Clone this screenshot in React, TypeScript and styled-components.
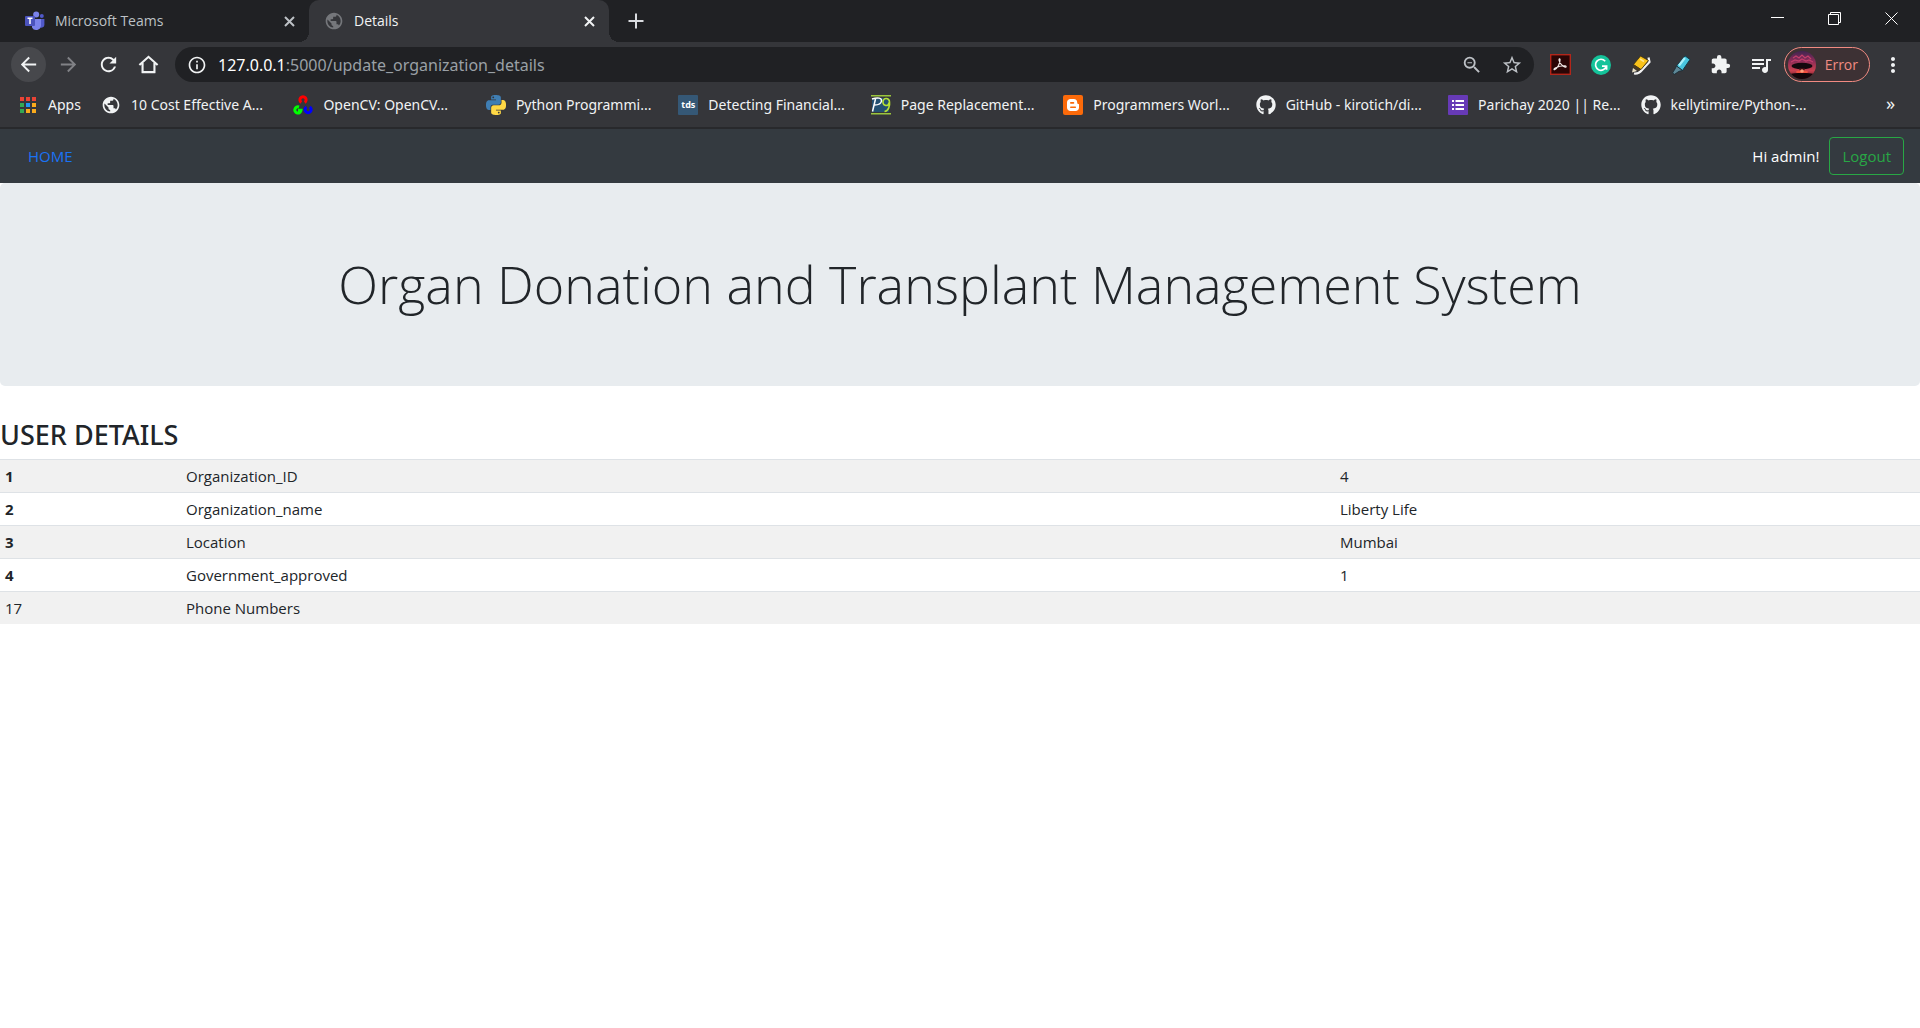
import React from "react";
import styled, { createGlobalStyle } from "styled-components";
import {
  MdArrowBack,
  MdArrowForward,
  MdExtension,
  MdInfoOutline,
  MdMoreVert,
  MdPublic,
  MdQueueMusic,
  MdRefresh,
  MdStarBorder,
  MdZoomOut,
} from "react-icons/md";
import { FaGithub } from "react-icons/fa";

const fontStack = `"Open Sans", "Noto Sans", sans-serif`;
const wideFontStack = `"Noto Sans", "Open Sans", sans-serif`;

const GlobalStyle = createGlobalStyle`
  * { box-sizing: border-box; }
  body {
    margin: 0;
    background: #fff;
    color: #212529;
    font-family: ${fontStack};
    font-size: 15px;
    line-height: 24px;
  }
  button, input { font-family: inherit; }
  svg { display: block; flex: none; }
`;

const PlainButton = styled.button`
  display: flex;
  align-items: center;
  justify-content: center;
  padding: 0;
  border: 0;
  background: none;
  color: inherit;
  cursor: pointer;
`;

/* Browser chrome */

const Chrome = styled.div`
  background: #35363a;
  color: #f1f3f4;
  border-bottom: 2px solid #28292c;
`;

const TabStrip = styled.div`
  display: flex;
  height: 42px;
  background: #202124;
`;

const Tab = styled.div<{ $active?: boolean }>`
  position: relative;
  display: flex;
  align-items: center;
  gap: 10px;
  width: ${(p) => (p.$active ? 300 : 309)}px;
  padding: 0 12px 0 ${(p) => (p.$active ? 15 : 25)}px;
  border-radius: 10px 10px 0 0;
  background: ${(p) => (p.$active ? "#35363a" : "transparent")};
  color: ${(p) => (p.$active ? "#f1f3f4" : "#bdc1c6")};
  font-size: 14px;

  &::before,
  &::after {
    content: "";
    display: ${(p) => (p.$active ? "block" : "none")};
    position: absolute;
    bottom: 0;
    width: 10px;
    height: 10px;
  }
  &::before {
    right: 100%;
    background: radial-gradient(circle at 0 0, transparent 10px, #35363a 10px);
  }
  &::after {
    left: 100%;
    background: radial-gradient(circle at 100% 0, transparent 10px, #35363a 10px);
  }
`;

const TabTitle = styled.span`
  flex: 1;
  overflow: hidden;
  white-space: nowrap;
`;

const TabClose = styled(PlainButton)`
  width: 16px;
  height: 24px;
`;

const NewTab = styled(PlainButton)`
  width: 32px;
  margin-left: 11px;
  color: #dadce0;
`;

const WindowButtons = styled.div`
  display: flex;
  align-items: flex-start;
  margin-left: auto;
`;

const WindowButton = styled(PlainButton)`
  width: 57px;
  height: 37px;
  color: #fff;
`;

const Toolbar = styled.div`
  display: flex;
  align-items: center;
  padding: 5px 14px 4px 8px;
`;

const NavButton = styled(PlainButton)<{ $held?: boolean; $dim?: boolean }>`
  width: 40px;
  height: 35px;
  color: ${(p) => (p.$dim ? "#818286" : "#f1f3f4")};

  svg {
    padding: 6px;
    width: 35px;
    height: 35px;
    border-radius: 50%;
    background: ${(p) => (p.$held ? "#47484c" : "transparent")};
  }
`;

const Omnibox = styled.div`
  display: flex;
  align-items: center;
  flex: 1;
  height: 35px;
  margin: 0 7px;
  padding: 0 2px 0 12px;
  border-radius: 18px;
  background: #202124;
`;

const Address = styled.div`
  flex: 1;
  padding-left: 11px;
  color: #9aa0a6;
  font-family: ${wideFontStack};
  font-size: 16px;
`;

const Host = styled.span`
  color: #fff;
`;

const ToolButton = styled(PlainButton)<{ $muted?: boolean }>`
  width: 40px;
  height: 35px;
  color: ${(p) => (p.$muted ? "#bdc1c6" : "#f1f3f4")};
`;

const Profile = styled(PlainButton)`
  gap: 9px;
  height: 35px;
  margin: 0 9px 0 3px;
  padding: 0 11px 0 3px;
  border: 1px solid #f28b82;
  border-radius: 18px;
  background: #3d3134;
  color: #f28b82;
  font-size: 14px;
`;

const MenuButton = styled(PlainButton)`
  width: 27px;
  color: #f1f3f4;
`;

const Bookmarks = styled.nav`
  display: flex;
  align-items: center;
  height: 41px;
  padding: 0 18px 4px;
  font-family: ${wideFontStack};
  font-size: 14px;
`;

const BookmarkGrid = styled.div`
  display: grid;
  grid-template-columns: repeat(9, 1fr);
  flex: 1;
`;

const Bookmark = styled.a`
  display: flex;
  align-items: center;
  gap: 10px;
  color: #f1f3f4;
  text-decoration: none;
  white-space: nowrap;
`;

const AppsLink = styled(Bookmark)`
  width: 83px;
`;

const Overflow = styled(PlainButton)`
  width: 69px;
  padding-left: 46px;
  padding-bottom: 4px;
  font-size: 18px;
`;

/* Page */

const Navbar = styled.header`
  display: flex;
  align-items: center;
  gap: 10px;
  padding: 8px 16px 8px 28px;
  background: #343a40;
`;

const HomeLink = styled.a`
  margin-right: auto;
  color: #1a73f5;
  text-decoration: none;
`;

const Greeting = styled.span`
  color: #fff;
`;

const Logout = styled.button`
  padding: 6px 12px;
  border: 1px solid #28a745;
  border-radius: 4px;
  background: transparent;
  color: #28a745;
  font-size: 15px;
  line-height: 24px;
  cursor: pointer;
`;

const Jumbotron = styled.section`
  margin-bottom: 32px;
  padding: 67px 32px 69px;
  border-radius: 5px;
  background: #e8ecef;
  text-align: center;
`;

const Title = styled.h1`
  margin: 0;
  font-size: 52px;
  font-weight: 300;
  line-height: 67px;
`;

const Heading = styled.h2`
  margin: 0 0 7px;
  font-family: ${wideFontStack};
  font-size: 27px;
  font-weight: 500;
  line-height: 34px;
`;

const Table = styled.table`
  width: 100%;
  border-collapse: collapse;
  table-layout: fixed;
`;

const Row = styled.tr`
  border-top: 1px solid #dee2e6;

  &:nth-child(odd) {
    background: #f1f1f1;
  }
`;

const IndexHead = styled.th`
  padding: 4px 5px;
  text-align: left;
`;

const Cell = styled.td`
  padding: 4px 5px;
`;

const IndexCol = styled.col`
  width: 181px;
`;

const ValueCol = styled.col`
  width: 585px;
`;

/* Icons */

const TeamsIcon = () => (
  <svg width="20" height="20" viewBox="0 0 20 20">
    <circle cx="16.8" cy="5" r="2" fill="#5059c9" />
    <path d="M14 8h5.4v6a3 3 0 0 1-5.4 1.500z" fill="#5059c9" />
    <circle cx="11.200" cy="3.600" r="3" fill="#7b83eb" />
    <path d="M7 8h9v6.500a4.800 4.800 0 0 1-9 2z" fill="#7b83eb" />
    <rect x="0" y="5" width="10" height="10" rx="1" fill="#4b53bc" />
    <path d="M2.500 7.300h5M5 7.300v5.600" stroke="#fff" strokeWidth="1.500" fill="none" />
  </svg>
);

const CrossIcon = () => (
  <svg width="11" height="11" viewBox="0 0 11 11" stroke="currentColor" strokeWidth="2">
    <path d="M1 1l9 9M10 1l-9 9" />
  </svg>
);

const PlusIcon = () => (
  <svg width="16" height="16" viewBox="0 0 16 16" stroke="currentColor" strokeWidth="2">
    <path d="M8 0.500v15M0.500 8h15" />
  </svg>
);

const MinimizeIcon = () => (
  <svg width="13" height="13" viewBox="0 0 13 13" stroke="currentColor">
    <path d="M0 5.500h13" />
  </svg>
);

const RestoreIcon = () => (
  <svg width="13" height="13" viewBox="0 0 13 13" stroke="currentColor" fill="none">
    <path d="M0.500 2.500h10v10h-10zM2.500 2.500v-2h10v10h-2" />
  </svg>
);

const CloseWindowIcon = () => (
  <svg width="13" height="13" viewBox="0 0 13 13" stroke="currentColor">
    <path d="M0.500 0.500l12 12M12.500 0.500l-12 12" />
  </svg>
);

const HomeIcon = () => (
  <svg viewBox="0 0 24 24" fill="none" stroke="currentColor" strokeWidth="2.200">
    <path d="M2.500 12.500L12 4l9.500 8.500M5.800 10.500V20h12.400v-9.500" />
  </svg>
);

const AcrobatIcon = () => (
  <svg width="21" height="21" viewBox="0 0 21 21">
    <rect x="0.700" y="0.700" width="19.600" height="19.600" fill="#2a0606" stroke="#b3261a" strokeWidth="1.400" />
    <path
      d="M4.500 15.800c2.500-1 5.800-6.500 5.600-10.300-.2-1.300-1.300-.8-1.100.6.400 2.800 3.500 6.500 6.200 7.100 1.400.1 1.300-1.100 0-1.300-3.300-.4-6.900.7-10 2.200-1.400.8-1.600 1.700-.7 1.700z"
      fill="none"
      stroke="#f0e9e7"
      strokeWidth="1.100"
    />
  </svg>
);

const GrammarlyIcon = () => (
  <svg width="20" height="20" viewBox="0 0 20 20">
    <circle cx="10" cy="10" r="10" fill="#15c39a" />
    <path d="M14.200 6.200A5.500 5.500 0 1 0 15.300 11.300M11 11.200h4.600v3.500" fill="none" stroke="#fff" strokeWidth="1.700" />
  </svg>
);

const YellowMarkerIcon = () => (
  <svg width="20" height="20" viewBox="0 0 20 20">
    <path d="M3 18.500c4 .5 6-1 8-3.500l7.500-8-1-4.500" fill="none" stroke="#f2f2f2" strokeWidth="2.200" />
    <path d="M9.500 1l8 4.500-7.500 9-7.500-5z" fill="#f9c21a" stroke="#3a2d10" strokeWidth=".8" />
    <path d="M2.500 9.500l7.500 5-2.500 1.500L2 12.500z" fill="#4a3b20" />
    <path d="M2 13l4 3-5 1.500z" fill="#e9dfc4" />
    <path d="M9 4l4 2.500" stroke="#ffe58a" strokeWidth="1.500" />
  </svg>
);

const BlueMarkerIcon = () => (
  <svg width="20" height="20" viewBox="0 0 20 20">
    <path d="M14 .8l5 3.700-7.500 11L5.500 11z" fill="#48c6df" stroke="#123a48" />
    <path d="M13.800 3l-5.800 7.500" stroke="#a9f0fa" strokeWidth="2.200" />
    <path d="M5.500 11l6 4.500-3.500.8-4.500 3-2-1.300 2.500-4z" fill="#5d8796" stroke="#172a33" strokeWidth=".8" />
  </svg>
);

const AvatarIcon = () => (
  <svg width="28" height="28" viewBox="0 0 28 28">
    <defs>
      <linearGradient id="sky" x1="0" y1="0" x2="0" y2="1">
        <stop offset="0" stopColor="#3f2450" />
        <stop offset=".35" stopColor="#8a2c58" />
        <stop offset=".7" stopColor="#c8404f" />
        <stop offset="1" stopColor="#5a1220" />
      </linearGradient>
      <clipPath id="avatarClip">
        <circle cx="14" cy="14" r="14" />
      </clipPath>
    </defs>
    <g clipPath="url(#avatarClip)">
      <rect width="28" height="28" fill="url(#sky)" />
      <path d="M5 7l3-2 3 2 3-3 3 3 3-2 3 3M3 11l4-2 4 1 3-2 4 2 3-1 4 2" stroke="#c33f6c" strokeWidth="1.200" fill="none" />
      <ellipse cx="14" cy="15" rx="10.500" ry="3.200" fill="#12080d" />
      <path d="M11 17h6l-1.500 5h-3z" fill="#3a0c12" />
      <ellipse cx="14" cy="21" rx="6" ry="1.800" fill="#f0503f" />
      <circle cx="14" cy="20" r="1.800" fill="#ff9c78" />
      <path d="M0 23c8-1.500 20-1.500 28 0v5H0z" fill="#14060a" />
    </g>
  </svg>
);

const AppsIcon = () => {
  const colors = ["#ea4335", "#ea4335", "#ea4335", "#34a853", "#2196f3", "#fbab1c", "#34a853", "#fbab1c", "#fbab1c"];
  return (
    <svg width="20" height="20" viewBox="0 0 20 20">
      {colors.map((fill, i) => (
        <rect key={i} x={2 + (i % 3) * 6} y={2 + Math.floor(i / 3) * 6} width="4" height="4" fill={fill} />
      ))}
    </svg>
  );
};

const OpenCvIcon = () => (
  <svg width="20" height="20" viewBox="0 0 20 20" fill="none" strokeWidth="3">
    <path d="M8.300 7.400a3.100 3.100 0 1 1 3.400 0" stroke="#f00" />
    <path d="M6 12a3.100 3.100 0 1 0 2 3.300H5" stroke="#0f0" />
    <path d="M13.400 12a3.100 3.100 0 1 0 3.400 0" stroke="#00f" />
  </svg>
);

const snake =
  "M14.250.18l.9.2.73.26.59.3.45.32.34.34.25.34.16.33.1.3.04.26.02.2-.01.13V8.500l-.05.63-.13.55-.21.46-.26.38-.3.31-.33.25-.35.19-.35.14-.33.1-.3.07-.26.04-.21.02H8.770l-.69.05-.59.14-.5.22-.41.27-.33.32-.27.35-.2.36-.15.37-.1.35-.07.32-.04.27-.02.21v3.060H3.170l-.21-.03-.28-.07-.32-.12-.35-.18-.36-.26-.36-.36-.35-.46-.32-.59-.28-.73-.21-.88-.14-1.050-.05-1.230.06-1.220.16-1.040.24-.87.32-.71.36-.57.4-.44.42-.33.42-.24.4-.16.36-.1.32-.05.24-.01h.16l.06.01h8.160v-.83H6.180l-.01-2.750-.02-.37.05-.34.11-.31.17-.28.25-.26.31-.23.38-.2.44-.18.51-.15.58-.12.64-.1.71-.06.77-.04.84-.02 1.270.05zm-6.300 1.980l-.23.33-.08.41.08.41.23.34.33.22.41.09.41-.09.33-.22.23-.34.08-.41-.08-.41-.23-.33-.33-.22-.41-.09-.41.09z";

const PythonIcon = () => (
  <svg width="20" height="20" viewBox="0 0 24 24">
    <path d={snake} fill="#3f7eb3" />
    <path d={snake} fill="#ffd845" transform="rotate(180 12 12)" />
  </svg>
);

const TdsIcon = styled.span`
  width: 20px;
  height: 20px;
  border-radius: 1px;
  background: #355876;
  color: #fff;
  font-size: 9px;
  font-weight: 700;
  line-height: 19px;
  text-align: center;
`;

const P9Icon = () => (
  <svg width="20" height="20" viewBox="0 0 20 20" fill="none">
    <rect x="1" y="3" width="17" height="14" fill="#235071" />
    <path d="M0 .8h20M0 18.800h20" stroke="#9bc53d" strokeWidth="1.500" />
    <path d="M1.500 16.500L4.500 4M1 4c6-2 10-1 9.500 2S7 10 3.500 10" stroke="#fff" strokeWidth="1.500" />
    <path d="M18.500 7.500a3.300 3.500 0 1 0-1.500 2.500l1.500-3c.6 4-1.200 9-5 9.500" stroke="#b9e234" strokeWidth="1.600" />
  </svg>
);

const BloggerIcon = () => (
  <svg width="20" height="20" viewBox="0 0 20 20">
    <rect width="20" height="20" rx="2" fill="#fb6a0a" />
    <path
      d="M7.500 4h3.200c2.300 0 3.500 1.500 3.500 3.500 0 1 .3 1.300 1 1.400.7 0 .8.400.8 1v2.600c0 2-1.500 3.500-3.500 3.500h-5C5.500 16 4 14.500 4 12.500v-5C4 5.500 5.500 4 7.500 4z"
      fill="#fff"
    />
    <path d="M7.800 7.900h2.700M7.800 12.200h4.500" stroke="#fb6a0a" strokeWidth="1.600" strokeLinecap="round" />
  </svg>
);

const FormIcon = () => (
  <svg width="20" height="20" viewBox="0 0 20 20">
    <rect width="20" height="20" rx="1" fill="#673ab7" />
    <path d="M4 6h2M4 10h2M4 14h2M7.500 6H16M7.500 10H16M7.500 14H16" stroke="#fff" strokeWidth="2" />
  </svg>
);

const bookmarks = [
  { icon: <MdPublic size={20} />, title: "10 Cost Effective A..." },
  { icon: <OpenCvIcon />, title: "OpenCV: OpenCV..." },
  { icon: <PythonIcon />, title: "Python Programmi..." },
  { icon: <TdsIcon>tds</TdsIcon>, title: "Detecting Financial..." },
  { icon: <P9Icon />, title: "Page Replacement..." },
  { icon: <BloggerIcon />, title: "Programmers Worl..." },
  { icon: <FaGithub size={20} />, title: "GitHub - kirotich/di..." },
  { icon: <FormIcon />, title: "Parichay 2020 || Re..." },
  { icon: <FaGithub size={20} />, title: "kellytimire/Python-..." },
];

const details = [
  { label: "Organization_ID", value: "4" },
  { label: "Organization_name", value: "Liberty Life" },
  { label: "Location", value: "Mumbai" },
  { label: "Government_approved", value: "1" },
];

export default function App() {
  return (
    <>
      <GlobalStyle />
      <Chrome>
        <TabStrip>
          <Tab>
            <TeamsIcon />
            <TabTitle>Microsoft Teams</TabTitle>
            <TabClose aria-label="Close tab"><CrossIcon /></TabClose>
          </Tab>
          <Tab $active>
            <MdPublic size={20} color="#75777b" />
            <TabTitle>Details</TabTitle>
            <TabClose aria-label="Close tab"><CrossIcon /></TabClose>
          </Tab>
          <NewTab aria-label="New tab"><PlusIcon /></NewTab>
          <WindowButtons>
            <WindowButton aria-label="Minimize"><MinimizeIcon /></WindowButton>
            <WindowButton aria-label="Restore"><RestoreIcon /></WindowButton>
            <WindowButton aria-label="Close"><CloseWindowIcon /></WindowButton>
          </WindowButtons>
        </TabStrip>
        <Toolbar>
          <NavButton $held aria-label="Back"><MdArrowBack /></NavButton>
          <NavButton $dim aria-label="Forward"><MdArrowForward /></NavButton>
          <NavButton aria-label="Reload"><MdRefresh /></NavButton>
          <NavButton aria-label="Home"><HomeIcon /></NavButton>
          <Omnibox>
            <MdInfoOutline size={20} />
            <Address><Host>127.0.0.1</Host>:5000/update_organization_details</Address>
            <ToolButton $muted aria-label="Zoom"><MdZoomOut size={22} /></ToolButton>
            <ToolButton $muted aria-label="Bookmark"><MdStarBorder size={22} /></ToolButton>
          </Omnibox>
          <ToolButton aria-label="Acrobat"><AcrobatIcon /></ToolButton>
          <ToolButton aria-label="Grammarly"><GrammarlyIcon /></ToolButton>
          <ToolButton aria-label="Highlighter"><YellowMarkerIcon /></ToolButton>
          <ToolButton aria-label="Marker"><BlueMarkerIcon /></ToolButton>
          <ToolButton aria-label="Extensions"><MdExtension size={21} /></ToolButton>
          <ToolButton aria-label="Media"><MdQueueMusic size={24} /></ToolButton>
          <Profile><AvatarIcon />Error</Profile>
          <MenuButton aria-label="Menu"><MdMoreVert size={24} /></MenuButton>
        </Toolbar>
        <Bookmarks>
          <AppsLink href="#"><AppsIcon />Apps</AppsLink>
          <BookmarkGrid>
            {bookmarks.map((b) => (
              <Bookmark href="#" key={b.title}>{b.icon}{b.title}</Bookmark>
            ))}
          </BookmarkGrid>
          <Overflow aria-label="More bookmarks">»</Overflow>
        </Bookmarks>
      </Chrome>
      <Navbar>
        <HomeLink href="#">HOME</HomeLink>
        <Greeting>Hi admin!</Greeting>
        <Logout>Logout</Logout>
      </Navbar>
      <main>
        <Jumbotron>
          <Title>Organ Donation and Transplant Management System</Title>
        </Jumbotron>
        <Heading>USER DETAILS</Heading>
        <Table>
          <colgroup>
            <IndexCol />
            <col />
            <ValueCol />
          </colgroup>
          <tbody>
            {details.map((d, i) => (
              <Row key={d.label}>
                <IndexHead scope="row">{i + 1}</IndexHead>
                <Cell>{d.label}</Cell>
                <Cell>{d.value}</Cell>
              </Row>
            ))}
            <Row>
              <Cell>17</Cell>
              <Cell>Phone Numbers</Cell>
              <Cell />
            </Row>
          </tbody>
        </Table>
      </main>
    </>
  );
}
